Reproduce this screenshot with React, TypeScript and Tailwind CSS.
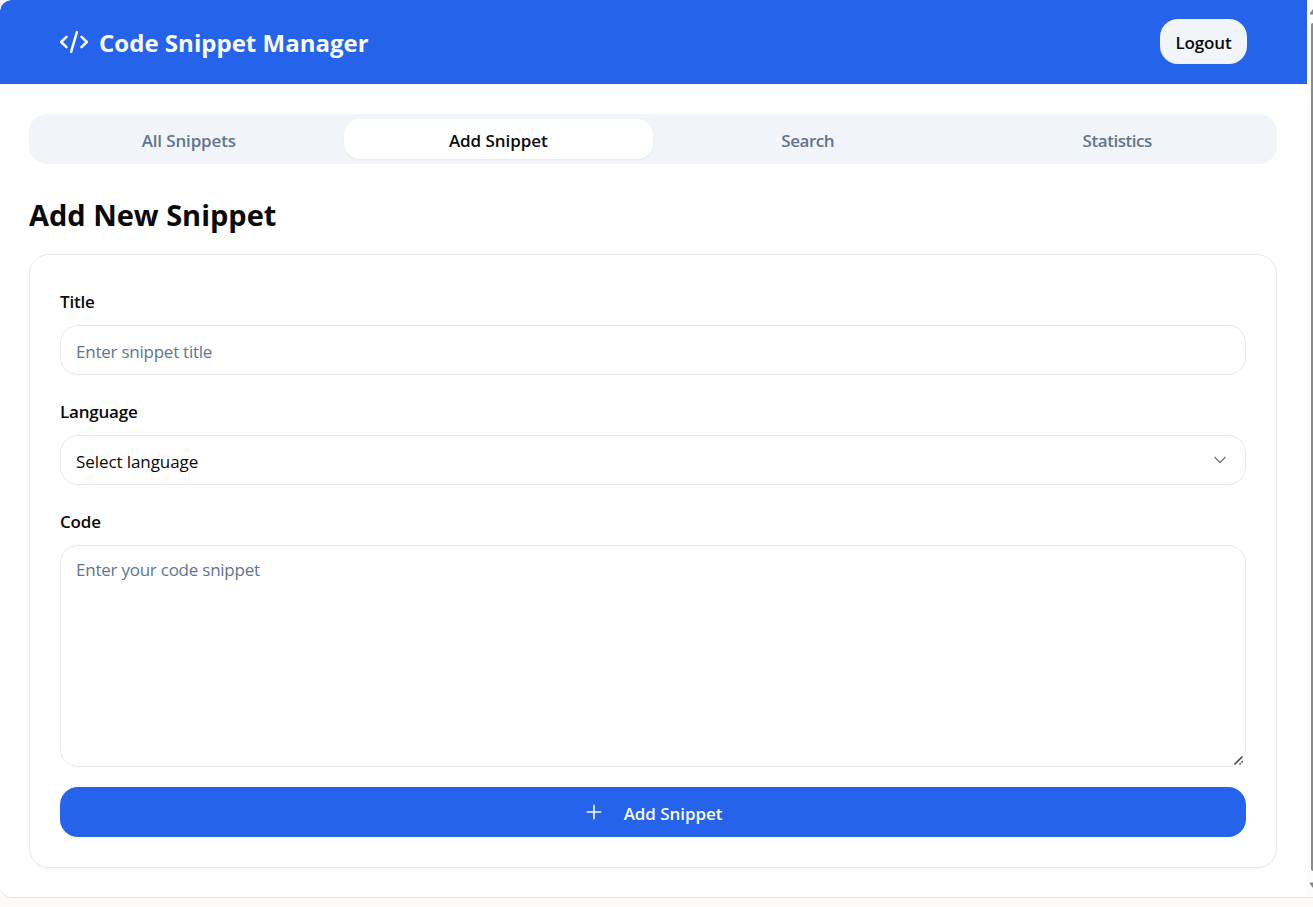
import { ChevronDown } from "lucide-react";

const tabs = [
  { label: "All Snippets", active: false, tracking: "tracking-[-0.15px]" },
  { label: "Add Snippet", active: true, tracking: "tracking-[-0.07px]" },
  { label: "Search", active: false, tracking: "tracking-[-0.45px]" },
  { label: "Statistics", active: false, tracking: "tracking-[-0.45px]" },
];

function CodeIcon() {
  return (
    <svg
      className="h-[30px] w-[30px]"
      viewBox="0 0 24 24"
      fill="none"
      stroke="currentColor"
      strokeWidth="2"
      strokeLinecap="round"
      strokeLinejoin="round"
    >
      <path d="m18 7.9 4.3 4.1-4.3 4.1M6 7.9 1.7 12 6 16.1m8.3-12L9.7 19.9" />
    </svg>
  );
}

function Header() {
  return (
    <header className="flex h-[84px] items-center justify-between rounded-tl-[10px] bg-[#2563eb] pr-[60px] pl-[59px]">
      <h1 className="flex items-center gap-[10px] text-2xl font-bold text-slate-50">
        <CodeIcon />
        <span className="relative top-px tracking-[0.02px] whitespace-nowrap">Code Snippet Manager</span>
      </h1>
      <button className="mb-px flex h-[45px] w-[87px] items-center justify-center rounded-[18px] bg-slate-100 pt-[2px] text-[17px] font-semibold tracking-[-0.15px] text-[#0a0a0a]">
        Logout
      </button>
    </header>
  );
}

function Tabs() {
  return (
    <nav className="grid h-[50px] grid-cols-4 rounded-[18px] bg-slate-100 p-[5px]">
      {tabs.map((t) => (
        <button
          key={t.label}
          className={`flex items-center justify-center rounded-[16px] pt-[3px] text-[17px] font-semibold ${t.tracking} ${
            t.active ? "bg-white text-[#0a0a0a] shadow-[0_1px_2px_rgba(0,0,0,0.05)]" : "text-slate-500"
          }`}
        >
          {t.label}
        </button>
      ))}
    </nav>
  );
}

function Label({ children }: { children: string }) {
  return (
    <label className="block h-[18px] text-[17px] leading-[20px] font-semibold tracking-[-0.2px] text-[#0a0a0a]">{children}</label>
  );
}

function Scrollbar() {
  return (
    <div className="flex h-[898px] w-1.5 flex-col items-end bg-[#fcfcfc] pt-[9px]">
      <svg className="h-[6px] w-[3px]" viewBox="0 0 3 6">
        <path d="M0 5.5V4L3 0v5.5z" fill="#858585" />
      </svg>
      <div className="mt-[8px] h-[848px] w-[2px] rounded-l-[2px] bg-[#8b8b8b]" />
      <svg className="mt-[11px] h-[6px] w-[3px]" viewBox="0 0 3 6">
        <path d="M0 .5V2l3 4V.5z" fill="#858585" />
      </svg>
    </div>
  );
}

export default function App() {
  return (
    <div className="h-[907px] overflow-hidden bg-[#fbfaf7] font-['Open_Sans','Noto_Sans',sans-serif]">
      <div className="flex h-[898px] overflow-hidden rounded-l-[12px] border-b border-[#e6e6e1] bg-white">
        <div className="min-w-0 flex-1">
          <Header />
          <main className="pt-[30px] pr-[30px] pl-[29px]">
            <Tabs />
            <h2 className="mt-[30px] h-[60px] text-[29px] leading-[42px] font-bold tracking-[-0.02px] whitespace-nowrap text-[#0a0a0a]">
              Add New Snippet
            </h2>
            <form className="flex h-[614px] flex-col rounded-[20px] border border-[#e4e8ec] px-[30px] pt-[37px] shadow-[0_1px_2px_rgba(0,0,0,0.05)]">
              <Label>Title</Label>
              <input
                className="mt-[15px] h-[50px] w-full shrink-0 rounded-[18px] border border-[#e4e8ec] px-[15px] pt-[3px] text-[17px] tracking-[-0.24px] text-[#0a0a0a] outline-none placeholder:text-slate-500"
                placeholder="Enter snippet title"
              />
              <div className="h-[27px]" />
              <Label>Language</Label>
              <button
                type="button"
                className="mt-[15px] flex h-[50px] w-full items-center justify-between rounded-[18px] border border-[#e4e8ec] px-[15px] text-[17px] tracking-[-0.08px] text-[#0a0a0a]"
              >
                <span className="pt-[3px]">Select language</span>
                <ChevronDown className="h-5 w-5 text-[#808080]" strokeWidth={2} />
              </button>
              <div className="h-[27px]" />
              <Label>Code</Label>
              <div className="relative mt-[15px] h-[222px] shrink-0">
                <textarea
                  className="block h-full w-full resize-none rounded-[18px] border border-[#e4e8ec] px-[15px] pt-[11px] text-[17px] leading-[25px] tracking-[-0.24px] text-[#0a0a0a] outline-none placeholder:text-slate-500"
                  placeholder="Enter your code snippet"
                />
                <svg className="absolute right-[2px] bottom-[1px] h-[10px] w-[10px] bg-white" viewBox="0 0 10 10" fill="none" stroke="#4b4b4b" strokeWidth="1.6">
                  <path d="M.5 8.5 8.5.5M5.5 8.5l1.3-1.3M7.5 6.5l1.3-1.3" />
                </svg>
              </div>
              <button
                type="button"
                className="mt-5 flex h-[50px] w-full items-center justify-center rounded-[18px] bg-[#2563eb] text-[17px] font-semibold tracking-[-0.07px] text-slate-50"
              >
                <svg className="mr-[20px] h-5 w-5" viewBox="0 0 24 24" fill="none" stroke="currentColor" strokeWidth="1.9" strokeLinecap="round">
                  <path d="M4 12h16M12 4v16" />
                </svg>
                <span className="pt-[3px]">Add Snippet</span>
              </button>
            </form>
          </main>
        </div>
        <Scrollbar />
      </div>
    </div>
  );
}
